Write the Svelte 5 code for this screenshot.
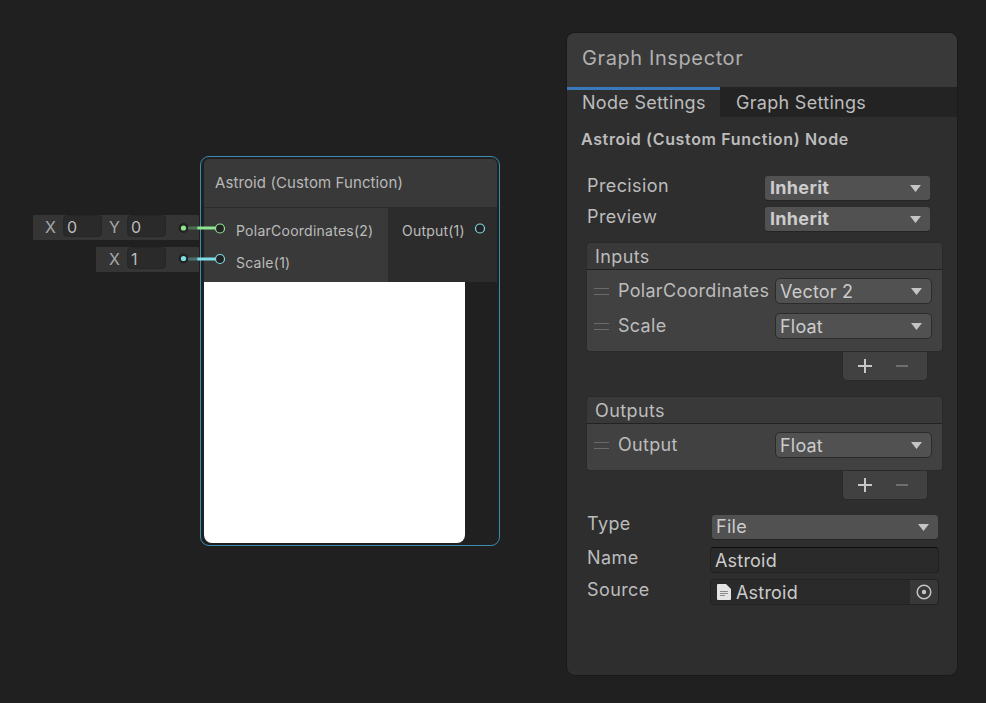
<!-- shader graph editor: one custom function node plus the graph inspector -->
<script lang="ts">
	const lists = [
		{ title: 'Inputs', rows: [{ name: 'PolarCoordinates', type: 'Vector 2' }, { name: 'Scale', type: 'Float' }] },
		{ title: 'Outputs', rows: [{ name: 'Output', type: 'Float' }] }
	];
</script>

{#snippet caret()}
	<svg class="caret" width="11" height="7" viewBox="0 0 11 7"><path d="M0 0h11L5.5 7z" fill="#c4c4c4" /></svg>
{/snippet}

<main class="canvas">
	<section class="node">
		<div class="node-frame">
			<header class="node-title">Astroid (Custom Function)</header>
			<div class="ports">
				<div class="port-col inputs">
					<div class="port-row first">PolarCoordinates(2)</div>
					<div class="port-row second">Scale(1)</div>
				</div>
				<div class="port-col outputs">
					<span>Output(1)</span>
				</div>
			</div>
			<div class="preview"></div>
		</div>

		<div class="strip strip-a">
			<span class="axis">X</span><span class="num">0</span>
			<span class="axis">Y</span><span class="num">0</span>
		</div>
		<div class="strip strip-b">
			<span class="axis">X</span><span class="num">1</span>
		</div>

		<svg class="wires" width="320" height="100" viewBox="0 0 320 100">
			<defs>
				<linearGradient id="wa" x1="0" x2="1">
					<stop offset="0" stop-color="#4a6a4c" /><stop offset="0.28" stop-color="#4f7451" /><stop offset="0.32" stop-color="#8ee58f" />
				</linearGradient>
				<linearGradient id="wb" x1="0" x2="1">
					<stop offset="0" stop-color="#45686c" /><stop offset="0.28" stop-color="#4b7378" /><stop offset="0.32" stop-color="#7fdde6" />
				</linearGradient>
			</defs>
			<circle cx="16.5" cy="16" r="5" fill="#232323" />
			<circle cx="16.5" cy="16" r="2.6" fill="#8ee58f" />
			<rect x="21" y="14.5" width="31" height="3" fill="url(#wa)" />
			<circle cx="53" cy="16.5" r="4.5" fill="#232323" stroke="#8ee58f" stroke-width="1.2" />
			<circle cx="16.5" cy="46.5" r="5" fill="#232323" />
			<circle cx="16.5" cy="46.5" r="2.6" fill="#7fdde6" />
			<rect x="21" y="45.5" width="31" height="3" fill="url(#wb)" />
			<circle cx="53" cy="47" r="4.5" fill="#232323" stroke="#7fdde6" stroke-width="1.2" />
			<circle cx="313" cy="16.5" r="4.5" fill="#232323" stroke="#7fdde6" stroke-width="1.2" />
		</svg>
	</section>

	<aside class="inspector">
		<h1>Graph Inspector</h1>
		<nav class="tabs">
			<button class="tab active">Node Settings</button>
			<button class="tab">Graph Settings</button>
		</nav>
		<div class="body">
			<h2>Astroid (Custom Function) Node</h2>

			<div class="settings">
				<div class="setting">
					<span>Precision</span>
					<div class="drop bold">Inherit{@render caret()}</div>
				</div>
				<div class="setting">
					<span>Preview</span>
					<div class="drop bold">Inherit{@render caret()}</div>
				</div>
			</div>

			{#each lists as list}
				<div class="list">
					<div class="list-head">{list.title}</div>
					<div class="list-body">
						{#each list.rows as row}
							<div class="list-row">
								<span class="grip"></span>
								<span class="row-name">{row.name}</span>
								<div class="drop inset">{row.type}{@render caret()}</div>
							</div>
						{/each}
					</div>
					<div class="list-foot">
						<svg width="16" height="16" viewBox="0 0 16 16"><path d="M8 1v14M1 8h14" stroke="#c8c8c8" stroke-width="2" /></svg>
						<svg width="16" height="16" viewBox="0 0 16 16"><path d="M2 8h12" stroke="#6f6f6f" stroke-width="2" /></svg>
					</div>
				</div>
			{/each}

			<div class="fields">
				<div class="field">
					<span class="type-label">Type</span>
					<div class="drop wide">File{@render caret()}</div>
				</div>
				<div class="field">
					<span>Name</span>
					<div class="text-input top-shade">Astroid</div>
				</div>
				<div class="field">
					<span>Source</span>
					<div class="text-input object">
						<svg width="14" height="16" viewBox="0 0 14 16">
							<path d="M1 0h8l5 5v10a1 1 0 0 1-1 1H1a1 1 0 0 1-1-1V1a1 1 0 0 1 1-1z" fill="#e4e4e4" />
							<path d="M3 7.5h8M3 9.5h8M3 11.5h5" stroke="#8a8a8a" />
						</svg>
						<span class="obj-name">Astroid</span>
						<span class="picker">
							<svg width="16" height="16" viewBox="0 0 16 16">
								<circle cx="8" cy="8" r="6.8" fill="none" stroke="#c4c4c4" stroke-width="1.5" />
								<circle cx="8" cy="8" r="2.2" fill="#c4c4c4" />
							</svg>
						</span>
					</div>
				</div>
			</div>
		</div>
	</aside>
</main>

<style>
	:global(body) {
		background: #202020;
	}
	.canvas {
		position: relative;
		width: 986px;
		height: 703px;
		overflow: hidden;
		background: #202020;
		color: #bcbcbc;
		font-family: Inter, 'Liberation Sans', sans-serif;
	}

	/* node */
	.node {
		position: absolute;
		left: 200px;
		top: 156px;
		width: 300px;
		height: 390px;
		box-sizing: border-box;
		border: 1.5px solid #3b8bb5;
		border-radius: 9px;
		padding: 2px;
	}
	.node-frame {
		height: 100%;
		display: flex;
		flex-direction: column;
		margin-left: 1px;
	}
	.node-title {
		height: 49px;
		flex: none;
		display: flex;
		align-items: center;
		padding: 0 0 2px 11px;
		box-sizing: border-box;
		background: #393939;
		border-bottom: 1px solid #2b2b2b;
		border-radius: 5px 5px 0 0;
		font-size: 15px;
		letter-spacing: 0.1px;
		color: #b8b8b8;
	}
	.ports {
		display: flex;
		height: 74px;
		flex: none;
		font-size: 14px;
		letter-spacing: 0.25px;
	}
	.port-col.inputs {
		width: 184px;
		background: #393939;
		padding-left: 32px;
		box-sizing: border-box;
	}
	.port-row.first {
		margin-top: 14px;
		height: 32px;
	}
	.port-col.outputs {
		flex: 1;
		background: #2c2c2c;
		padding: 14px 0 0 14px;
		letter-spacing: 0.2px;
	}
	.preview {
		width: 261px;
		height: 261px;
		flex: none;
		background: #fff;
		border-radius: 0 0 8px 8px;
	}

	/* default value strips hanging off the left of the node */
	.strip {
		position: absolute;
		right: 300px;
		display: flex;
		align-items: flex-start;
		box-sizing: border-box;
		background: #353535;
		font-size: 16px;
	}
	.strip-a {
		top: 58px;
		width: 166px;
		height: 25px;
		padding-left: 12px;
	}
	.strip-b {
		top: 90px;
		width: 103px;
		height: 25px;
		padding-left: 13px;
	}
	.axis {
		width: 18px;
		height: 22px;
		line-height: 24px;
		color: #a8a8a8;
	}
	.num {
		width: 39px;
		height: 22px;
		box-sizing: border-box;
		line-height: 22px;
		padding-left: 3px;
		margin-right: 7px;
		background: #2a2a2a;
		border: 1px solid #262626;
		border-radius: 4px;
	}
	.wires {
		position: absolute;
		left: -34px;
		top: 55px;
		pointer-events: none;
		overflow: visible;
	}

	/* inspector */
	.inspector {
		position: absolute;
		left: 567px;
		top: 33px;
		width: 390px;
		height: 642px;
		display: flex;
		flex-direction: column;
		background: #2e2e2e;
		border-radius: 8px;
		overflow: hidden;
		box-shadow: 0 0 0 1px #1a1a1a;
	}
	h1 {
		margin: 0;
		height: 54px;
		flex: none;
		box-sizing: border-box;
		padding: 13px 15px 0;
		background: #393939;
		font-size: 20px;
		font-weight: 400;
		letter-spacing: 0.6px;
		color: #b0b0b0;
	}
	.tabs {
		display: flex;
		height: 30px;
		flex: none;
		background: #232323;
	}
	.tab {
		all: unset;
		box-sizing: border-box;
		width: 153px;
		padding: 0 16px 3px; /* buttons centre their content, so this lifts the label */
		font-size: 18px;
		line-height: 21px;
		letter-spacing: 0.3px;
		white-space: nowrap;
		border-top: 3px solid transparent;
		color: #bcbcbc;
	}
	.tab.active {
		background: #2e2e2e;
		border-top-color: #3a79bb;
		padding-left: 15px;
	}
	.body {
		flex: 1;
		padding: 12px 14px 0;
	}
	h2 {
		margin: 0 0 27px;
		font-size: 16px;
		line-height: 20px;
		letter-spacing: 0.65px;
		font-weight: 600;
		color: #bcbcbc;
	}
	.settings {
		display: flex;
		flex-direction: column;
		gap: 7px;
		padding: 0 13px 0 6px;
		margin-bottom: 11px;
	}
	.setting {
		display: flex;
		justify-content: space-between;
		height: 24px;
		font-size: 18px;
		letter-spacing: 0.4px;
	}
	.setting > span {
		line-height: 20px;
	}
	.drop {
		position: relative;
		box-sizing: border-box;
		background: #515151;
		border-radius: 3px;
		box-shadow: 0 1px 0 #242424;
		height: 24px;
		line-height: 24px;
		padding-left: 5px;
		font-size: 18px;
		letter-spacing: 0.3px;
		color: #cccccc;
	}
	.drop.bold {
		width: 165px;
		font-weight: 700;
	}
	.drop.inset {
		width: 157px;
		height: 26px;
		line-height: 25px;
		padding-left: 4px;
		border: 1px solid #2b2b2b;
		border-radius: 5px;
		box-shadow: none;
		margin-left: auto;
		letter-spacing: 0.2px;
	}
	.drop.wide {
		width: 226px;
		margin-right: 1px;
		padding-left: 4px;
	}
	.caret {
		position: absolute;
		right: 9px;
		top: 9px;
	}
	.list {
		margin: 0 0 15px 5px;
		width: 357px;
	}
	.list-head {
		height: 28px;
		box-sizing: border-box;
		padding-left: 8px;
		line-height: 27px;
		font-size: 18px;
		letter-spacing: 0.4px;
		background: #393939;
		border: 1px solid #2a2a2a;
		border-bottom-color: #222;
		border-radius: 4px 4px 0 0;
	}
	.list-body {
		background: #414141;
		border: 1px solid #2a2a2a;
		border-top: 0;
		border-radius: 0 0 4px 4px;
		padding: 8px 10px 12px 7px;
		display: flex;
		flex-direction: column;
		gap: 9px;
	}
	.list-row {
		display: flex;
		align-items: center;
		height: 26px;
		font-size: 18px;
		letter-spacing: 0.3px;
	}
	.row-name {
		padding-bottom: 2px;
	}
	.grip {
		width: 15px;
		height: 5px;
		margin-right: 9px;
		border-top: 1px solid #6a6a6a;
		border-bottom: 1px solid #6a6a6a;
	}
	.list-foot {
		display: flex;
		justify-content: center;
		align-items: center;
		gap: 21px;
		width: 86px;
		height: 29px;
		margin-left: 256px;
		box-sizing: border-box;
		background: #414141;
		border: 1px solid #2a2a2a;
		border-top: 0;
		border-radius: 0 0 5px 5px;
		padding-right: 4px;
	}
	.fields {
		display: flex;
		flex-direction: column;
		margin: 2px 4px 0 6px;
		gap: 6px;
	}
	.field {
		display: flex;
		justify-content: space-between;
		font-size: 18px;
		letter-spacing: 0.4px;
		min-height: 26px;
	}
	.field > span {
		line-height: 22px;
	}
	.field > span.type-label {
		line-height: 18px;
	}
	.text-input {
		box-sizing: border-box;
		width: 229px;
		height: 26px;
		line-height: 26px;
		padding-left: 4px;
		background: #2a2a2a;
		border: 1px solid #212121;
		border-radius: 4px;
		font-size: 18px;
		letter-spacing: 0.2px;
		color: #cccccc;
	}
	.top-shade {
		border-top-color: #0d0d0d;
	}
	.object {
		display: flex;
		align-items: center;
		padding-left: 6px;
		overflow: hidden;
	}
	.obj-name {
		margin-left: 5px;
		flex: 1;
		padding-top: 2px;
	}
	.picker {
		width: 28px;
		height: 100%;
		display: flex;
		align-items: center;
		justify-content: center;
		background: #383838;
	}
</style>
